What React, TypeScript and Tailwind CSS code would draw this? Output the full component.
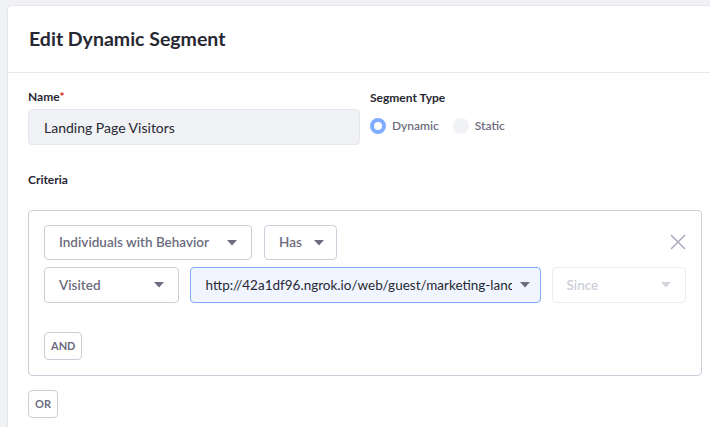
function Caret({ light = false }: { light?: boolean }) {
  return (
    <svg width="10" height="6" viewBox="0 0 10 6" className="shrink-0">
      <path d="M0 0 H10 L5 5.5 Z" fill={light ? '#d3d4dc' : '#6b6c7e'} />
    </svg>
  );
}

function Select({
  label,
  className,
  light = false,
}: {
  label: string;
  className: string;
  light?: boolean;
}) {
  return (
    <div
      className={`flex items-center justify-between gap-3 rounded border px-[14px] text-[13.5px] font-semibold ${className} ${
        light ? 'border-[#ececf1] text-[#cdced9]' : 'border-[#cdced9] text-[#6b6c7e]'
      }`}
    >
      <span>{label}</span>
      <Caret light={light} />
    </div>
  );
}

export default function App() {
  return (
    <div
      className="min-h-[427px] bg-[#f1f2f5] pl-[7px] pt-[5px]"
      style={{ fontFamily: 'Lato, "Noto Sans", sans-serif' }}
    >
      <div className="h-[422px] rounded-tl border-l border-t border-[#e7e7ed] bg-white">
        {/* Header */}
        <div className="flex h-[67px] items-center border-b border-[#e7e7ed] px-[21px]">
          <h1 className="text-[19.5px] font-bold text-[#272833]">Edit Dynamic Segment</h1>
        </div>

        <div className="px-[20px] pt-[15px]">
          {/* Name + Segment type */}
          <div className="flex gap-[10px]">
            <div className="w-[332px]">
              <label className="block text-[12px] font-bold text-[#272833]">
                Name<span className="text-[#da1414]">*</span>
              </label>
              <div className="mt-[3px] flex h-[36px] items-center rounded border border-[#e7e7ed] bg-[#f1f2f5] px-[15px] text-[14px] text-[#272833]">
                Landing Page Visitors
              </div>
            </div>
            <div className="pt-[1px]">
              <label className="block text-[12px] font-bold text-[#272833]">Segment Type</label>
              <div className="mt-[10px] flex items-center text-[12px] font-semibold text-[#6b6c7e]">
                <span className="h-[16px] w-[16px] rounded-full border-[4px] border-[#80acff] bg-white" />
                <span className="ml-[6px]">Dynamic</span>
                <span className="ml-[14px] h-[16px] w-[16px] rounded-full bg-[#f1f2f5]" />
                <span className="ml-[6px]">Static</span>
              </div>
            </div>
          </div>

          <label className="mt-[26px] block text-[12px] font-bold text-[#272833]">Criteria</label>

          {/* Criteria box */}
          <div className="mt-[21px] h-[166px] w-[674px] rounded border border-[#cdced9] px-[15px] pt-[14px]">
            <div className="flex items-start">
              <div className="flex gap-[12px]">
                <Select label="Individuals with Behavior" className="h-[35px] w-[208px]" />
                <Select label="Has" className="h-[35px] w-[73px]" />
              </div>
              <svg width="16" height="16" viewBox="0 0 16 16" className="ml-auto mt-[9px]">
                <path d="M1 1 L15 15 M15 1 L1 15" stroke="#a7a9bc" strokeWidth="1.5" fill="none" />
              </svg>
            </div>
            <div className="mt-[7px] flex gap-[11px]">
              <Select label="Visited" className="h-[36px] w-[135px]" />
              <div className="flex h-[36px] w-[351px] shrink-0 items-center justify-between gap-2 rounded border border-[#80acff] bg-[#f0f5ff] pl-[15px] pr-[10px] text-[13.5px] text-[#272833]">
                <span className="min-w-0 overflow-hidden whitespace-nowrap">
                  http://42a1df96.ngrok.io/web/guest/marketing-landing-page
                </span>
                <Caret />
              </div>
              <Select label="Since" light className="h-[36px] w-[135px]" />
            </div>
            <button className="mt-[29px] h-[28px] rounded border border-[#cdced9] px-[6px] text-[11px] font-bold text-[#6b6c7e]">
              AND
            </button>
          </div>

          <button className="mt-[14px] h-[28px] rounded border border-[#cdced9] px-[6px] text-[11px] font-bold text-[#6b6c7e]">
            OR
          </button>
        </div>
      </div>
    </div>
  );
}
